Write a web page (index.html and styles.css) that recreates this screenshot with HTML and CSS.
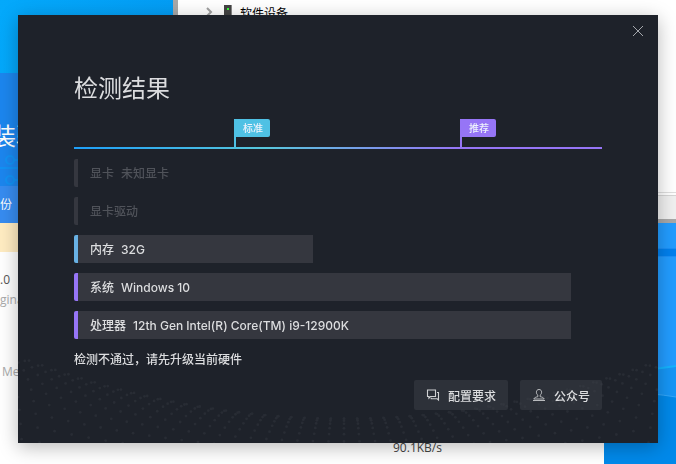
FILE: index.html
```html
<!DOCTYPE html>
<html lang="zh-CN">
<head>
  <meta charset="UTF-8" />
  <meta name="viewport" content="width=device-width, initial-scale=1.0"/>
  <title>检测结果</title>
  <link rel="stylesheet" href="styles.css">
</head>
<body>

  <!-- Desktop -->
  <div class="desktop">
    <svg class="wallpaper" viewBox="0 0 72 241" preserveAspectRatio="none">
      <path d="M0 0H72V241H0z" fill="#0089ea"/>
      <path d="M0 0H72V172H0z" fill="#229cff"/>
      <path d="M0 26H72V33H0z" fill="#0080ee"/>
      <path d="M0 25.500H72M0 33.500H72" stroke="#1b90f8"/>
      <path d="M0 153L72 143V174Q50 170 0 168z" fill="#1696f6"/>
      <path d="M0 153L72 143" stroke="#14b4ff" stroke-width="2"/>
      <path d="M0 168Q50 170 72 174" stroke="#35a8fa" fill="none"/>
    </svg>

    <div class="window devices">
      <div class="device">
        <svg class="chevron" width="7" height="10" viewBox="0 0 7 10"><path d="M1 1l4 4-4 4" fill="none" stroke="#a0a0a0" stroke-width="2"/></svg>
        <svg width="8" height="14" viewBox="0 0 8 14"><path d="M0 0h8v14H0z" fill="#444"/><path d="M7 0h1v14H7z" fill="#888"/><path d="M3 3h2v2H3z" fill="#3cff3c"/></svg>
        <span>软件设备</span>
      </div>
      <div class="statusbar"></div>
    </div>

    <div class="window installer">
      <div class="hero">
        <span>装驱</span>
        <svg class="circuit" width="18" height="34" viewBox="0 0 18 34" fill="none" stroke="#1292f5" stroke-width="2">
          <circle cx="10" cy="8" r="4"/><path d="M14 8h4M0 16h18M14 28h4"/><circle cx="10" cy="28" r="4"/>
        </svg>
      </div>
      <div class="tabs">份</div>
      <div class="notice"></div>
      <div class="details">
        <p class="version">.0</p>
        <p class="faint">ginal</p>
        <p class="faint vendor">Me</p>
        <p class="speed">90.1KB/s</p>
      </div>
    </div>
  </div>

  <!-- Dialog -->
  <main class="dialog">
    <svg class="dots" id="dots" viewBox="0 0 640 90" preserveAspectRatio="xMidYMax slice"></svg>
    <button class="close" aria-label="关闭">
      <svg width="12" height="12" viewBox="0 0 12 12"><path d="M1 1l10 10M11 1L1 11" stroke="#a5a8ad" fill="none"/></svg>
    </button>

    <h1>检测结果</h1>

    <div class="scale">
      <div class="flag standard"><span>标准</span></div>
      <div class="flag recommended"><span>推荐</span></div>
    </div>

    <ul class="results">
      <li class="result unknown"><span>显卡</span><span>未知显卡</span></li>
      <li class="result unknown"><span>显卡驱动</span></li>
      <li class="result mid" style="width: 45.3%"><span>内存</span><span>32G</span></li>
      <li class="result high" style="width: 94.2%"><span>系统</span><span>Windows 10</span></li>
      <li class="result high" style="width: 94.2%"><span>处理器</span><span>12th Gen Intel(R) Core(TM) i9-12900K</span></li>
    </ul>

    <p class="summary">检测不通过，请先升级当前硬件</p>

    <div class="actions">
      <button class="action">
        <svg width="14" height="14" viewBox="0 0 14 14" fill="none" stroke="#d0d1d3" stroke-width="1.1">
          <path d="M1.5 2h8v6.500h-5l-1.600 1.600v-1.600h-1.400z"/><path d="M11 4.500h1.500v7.500l-1.300-1.200h-6v-1"/>
        </svg>
        配置要求
      </button>
      <button class="action">
        <svg width="14" height="14" viewBox="0 0 14 14" fill="none" stroke="#b9bbbe" stroke-width="1">
          <path d="M7 1.500c-1.800 0-2.600 1.200-2.600 2.700s.7 2.300 1.400 2.900v1.600c-2 .4-3.500 1-4 2.300h10.400c-.5-1.300-2-1.900-4-2.300v-1.600c.7-.6 1.400-1.400 1.400-2.900s-.8-2.700-2.600-2.700z"/><path d="M1 12.500h12"/>
        </svg>
        公众号
      </button>
    </div>
  </main>

  <script src="dots.js"></script>
</body>
</html>
```

FILE: styles.css
```css
:root {
  --dialog: #1e222a;
  --bar: #35373f;
  --text: #dcdddf;
  --muted: #50535a;
  --standard: #4fc1e4;
  --recommended: #9675f6;
}

* {
  margin: 0; padding: 0; box-sizing: border-box;
  font-family: Inter, "Noto Sans CJK SC", sans-serif;
}

body {
  min-height: 100vh;
  padding: 15px 18px 21px;
  overflow: hidden;
}

/* Desktop */
.desktop {
  position: fixed;
  inset: 0;
  overflow: hidden;
  background: linear-gradient(100deg, #04a9fb, #0399f2 30%, #0088ea);
}

.wallpaper {
  position: absolute;
  right: 0;
  bottom: 0;
  width: 72px;
  height: 241px;
}

.window {
  position: absolute;
  background: #fff;
}

.devices {
  top: 0;
  left: 173px;
  right: 0;
  height: 223px;
  border-left: 5px solid #a8a8a8;
  border-bottom: 4px solid #a8a8a8;
  display: flex;
  flex-direction: column;
  justify-content: space-between;
}

.device {
  display: flex;
  align-items: center;
  gap: 8px;
  height: 24px;
  padding-left: 28px;
  font-size: 12px;
  color: #000;
}

.chevron {
  margin-right: 3px;
}

.statusbar {
  height: 24px;
  background: #f0f0f0;
  border-top: 1px solid #d5d5d5;
  box-shadow: 0 -2px #fff, 0 -3px #dedede;
}

.installer {
  top: 73px;
  left: 0;
  right: 72px;
  bottom: 0;
}

.hero {
  height: 113px;
  padding-top: 48px;
  margin-left: -8px;
  background: #1c86ee;
  color: #fff;
  font-size: 24px;
  line-height: 32px;
}

.circuit {
  display: block;
  margin: -1px 0 0 8px;
}

.tabs {
  height: 37px;
  background: #378cf0;
  color: #fff;
  font-size: 12px;
  line-height: 38px;
}

.notice {
  height: 29px;
  background: #ffecc2;
}

.details {
  padding-top: 18px;
  font-size: 12px;
  line-height: 20px;
  color: #555;
}

.details p {
  font-family: "Open Sans", "Noto Sans", sans-serif;
}

.details .faint {
  color: #aaa;
}

.details .vendor {
  margin-top: 52px;
  padding-left: 2px;
}

.details .speed {
  margin-top: 56px;
  padding-left: 393px;
  color: #444;
}

/* Dialog */
.dialog {
  position: relative;
  padding: 56px 56px 33px;
  background: var(--dialog);
  box-shadow: 0 4px 18px rgba(0, 0, 0, 0.28);
  color: var(--text);
  font-size: 12px;
}

.dots {
  position: absolute;
  left: 0;
  bottom: 0;
  width: 100%;
  height: 90px;
  fill: #282c34;
}

.close {
  position: absolute;
  top: 10px;
  right: 14px;
  padding: 0;
  width: 12px;
  height: 12px;
  background: none;
  border: none;
  cursor: pointer;
}

.close svg {
  display: block;
}

h1 {
  font-size: 24px;
  font-weight: 400;
  line-height: 36px;
}

.scale {
  display: grid;
  grid-template-columns: 30.3% 42.8% 1fr;
  margin-top: 12px;
  padding-bottom: 2px;
  background: linear-gradient(90deg, #1e9ff8, #57c7dc 36%, #9675f6 73%) bottom / 100% 2px no-repeat;
}

.flag {
  height: 28px;
  border-left: 2px solid;
}

.flag span {
  display: block;
  width: 34px;
  height: 18px;
  border-radius: 0 2px 2px 0;
  color: #eef3fc;
  font-size: 10px;
  font-weight: 500;
  line-height: 18px;
  text-align: center;
}

.standard {
  grid-column: 2;
  border-color: var(--standard);
}

.standard span {
  background: var(--standard);
}

.recommended {
  border-color: var(--recommended);
}

.recommended span {
  background: var(--recommended);
}

.results {
  display: grid;
  gap: 10px;
  margin-top: 10px;
  list-style: none;
}

.result {
  display: flex;
  gap: 7px;
  height: 28px;
  padding-left: 12px;
  border-left: 4px solid var(--bar);
  border-radius: 2px 0 0 2px;
  background: var(--bar);
  font-weight: 500;
  line-height: 29px;
}

.unknown {
  background: none;
  color: var(--muted);
}

.mid {
  border-color: #68b1e4;
}

.high {
  border-color: var(--recommended);
}

.summary {
  margin-top: 11px;
  font-weight: 500;
  line-height: 20px;
}

.actions {
  position: relative;
  display: flex;
  justify-content: flex-end;
  gap: 12px;
  margin-top: 10px;
}

.action {
  display: flex;
  align-items: center;
  gap: 8px;
  height: 30px;
  padding: 0 12px;
  border: none;
  border-radius: 2px;
  background: rgba(60, 63, 71, 0.5);
  color: var(--text);
  font-size: 12px;
  font-weight: 500;
  cursor: pointer;
}
```

FILE: dots.js
```js
// Wave of dotted strands, fanning out from the middle of the dialog
const dots = document.getElementById("dots");

for (let i = -27; i <= 27; i++) {
  const offset = i * 13.3;
  const lean = offset / 300;
  const crest = 65 - 0.00057 * offset * offset;
  for (let j = -1; j < 9; j++) {
    const dot = document.createElementNS("http://www.w3.org/2000/svg", "circle");
    dot.setAttribute("cx", 326 + offset + lean * (5 * j + j * j));
    dot.setAttribute("cy", crest + 1 + j + 0.7 * j * j);
    dot.setAttribute("r", 1.4);
    dots.appendChild(dot);
  }
}
```
